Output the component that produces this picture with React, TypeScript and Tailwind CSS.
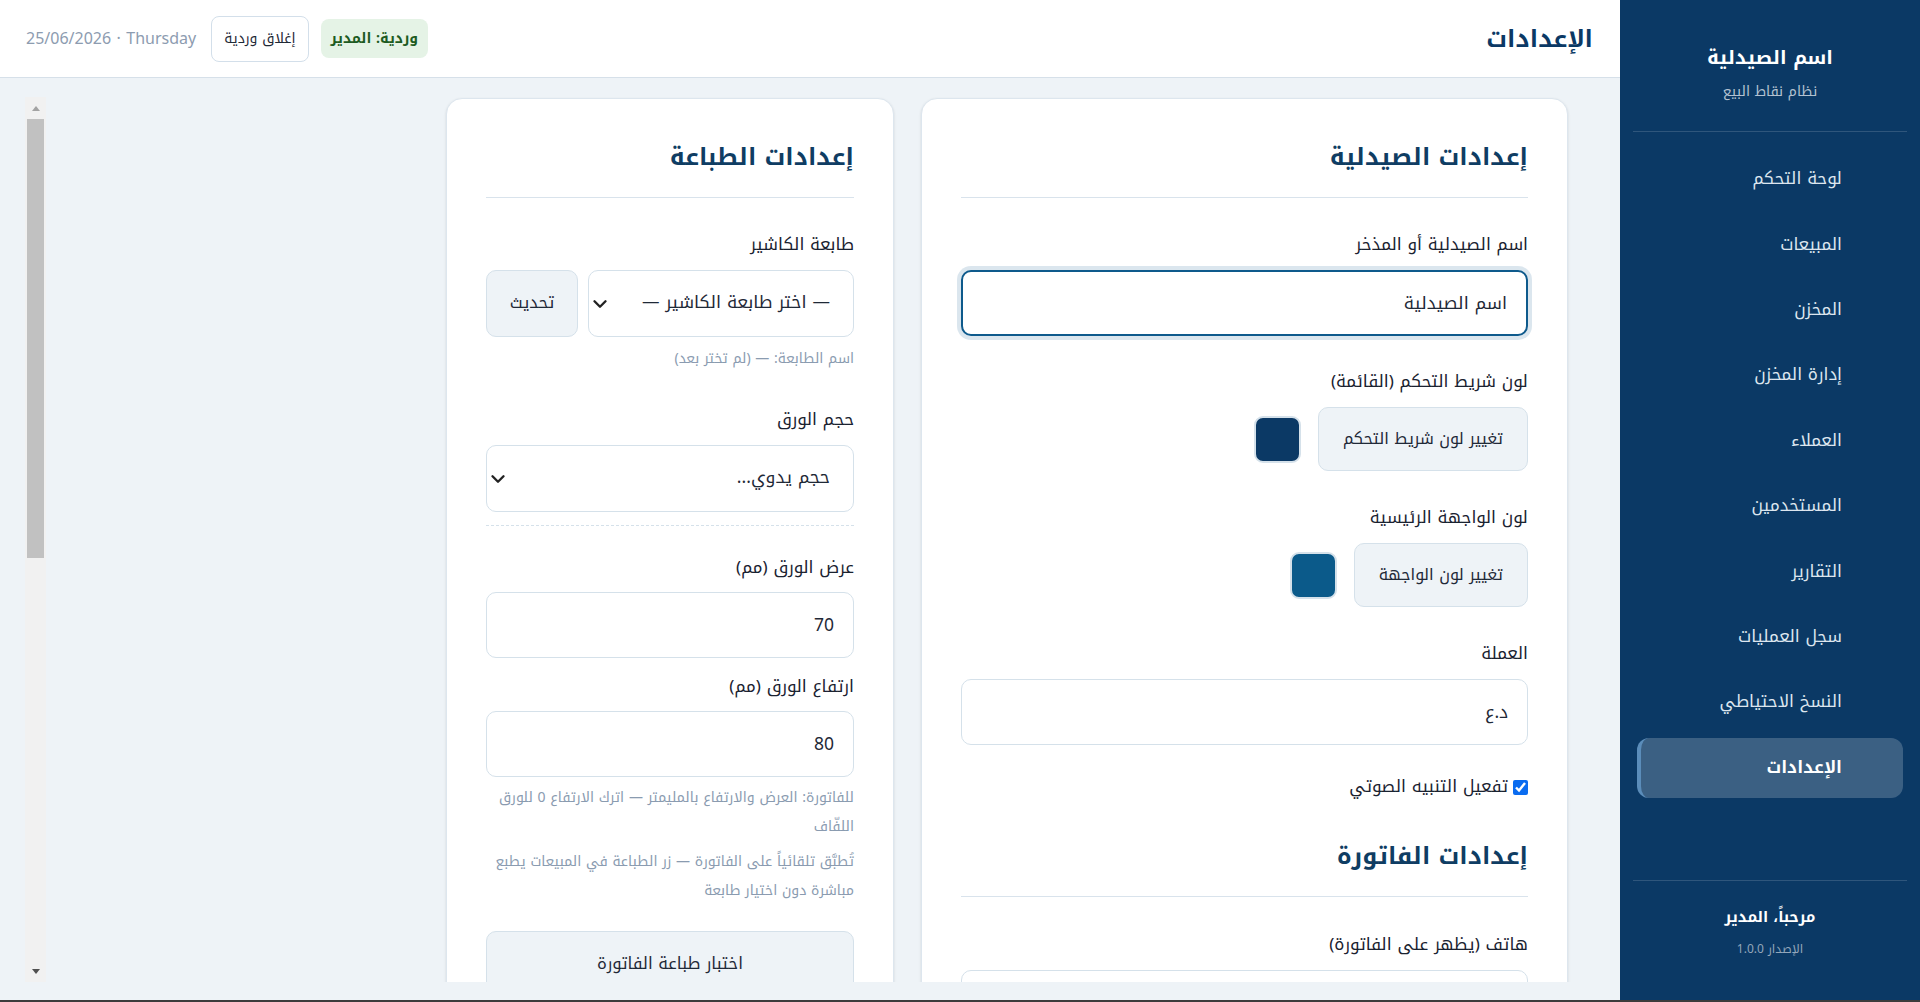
import React from "react";
import { ChevronDown } from "lucide-react";

const navItems = [
  "لوحة التحكم",
  "المبيعات",
  "المخزن",
  "إدارة المخزن",
  "العملاء",
  "المستخدمين",
  "التقارير",
  "سجل العمليات",
  "النسخ الاحتياطي",
  "الإعدادات",
];

const Sidebar: React.FC = () => (
  <aside className="w-[300px] shrink-0 bg-[#0b3965] text-white flex flex-col">
    <div className="mx-[13px] pt-[44px] pb-[29px] border-b border-white/15 text-center">
      <div className="text-[19px] font-bold leading-[28px]">اسم الصيدلية</div>
      <div className="mt-[9px] text-[14px] leading-[21px] text-[#b4c2d1]">نظام نقاط البيع</div>
    </div>
    <nav className="flex-1 flex flex-col gap-[5.4px] pt-[17px] px-[17px]">
      {navItems.map((item) =>
        item === "الإعدادات" ? (
          <div
            key={item}
            className="h-[60px] flex items-center pr-[61px] rounded-xl bg-white/20 border-l-4 border-[#5b8dba] text-[17px] font-bold text-white"
          >
            {item}
          </div>
        ) : (
          <div key={item} className="h-[60px] flex items-center pr-[61px] rounded-xl text-[17px] text-[#dde6ef]">
            {item}
          </div>
        )
      )}
    </nav>
    <div className="mx-[13px] h-[120px] border-t border-white/15 pt-[25px] text-center">
      <div className="text-[15px] font-bold leading-[22px]">مرحباً، المدير</div>
      <div className="mt-[12px] text-[12px] leading-[18px] text-[#93a6ba]">الإصدار 1.0.0</div>
    </div>
  </aside>
);

const Label: React.FC<{ children: React.ReactNode; className?: string }> = ({ children, className = "" }) => (
  <div className={"text-[17px] leading-[26px] text-[#1a2230] mb-[13px] " + className}>{children}</div>
);

const TextInput: React.FC<{ value?: string; focused?: boolean }> = ({ value = "", focused }) => (
  <input
    readOnly
    value={value}
    className={
      "w-full h-[66px] rounded-[10px] bg-white px-[19px] text-[17.5px] text-[#1f2937] outline-none " +
      (focused ? "border-2 border-[#0e5a8c] ring-4 ring-[#0b5a8a]/15" : "border border-[#d5e1ea]")
    }
  />
);

const SelectBox: React.FC<{ text: string }> = ({ text }) => (
  <div className="relative w-full h-[67px] rounded-[10px] border border-[#d5e1ea] bg-white flex items-center pr-[23px] text-[17.5px] text-[#1f2937]">
    {text}
    <ChevronDown size={22} strokeWidth={2.6} className="absolute left-0 top-1/2 -translate-y-1/2 text-[#222]" />
  </div>
);

const ColorRow: React.FC<{ text: string; color: string }> = ({ text, color }) => (
  <div className="flex items-center gap-[17px]">
    <button className="h-[64px] px-6 rounded-[10px] bg-[#eef3f7] border border-[#d5e1ea] text-[16px] text-[#1f2937]">
      {text}
    </button>
    <div className="w-[47px] h-[47px] rounded-[9px] border-2 border-[#d5e1ea]" style={{ backgroundColor: color }} />
  </div>
);

const CardTitle: React.FC<{ children: React.ReactNode; className?: string }> = ({ children, className = "" }) => (
  <h2
    className={
      "text-[24px] font-bold leading-[39px] text-[#0f3d63] pb-5 border-b border-[#d9e3ec] " + className
    }
  >
    {children}
  </h2>
);

const PharmacyCard: React.FC = () => (
  <section className="w-[647px] shrink-0 bg-white rounded-2xl border border-[#dde6ee] shadow-sm px-[39px] pt-[39px] pb-10">
    <CardTitle>إعدادات الصيدلية</CardTitle>

    <Label className="mt-[33px]">اسم الصيدلية أو المذخر</Label>
    <TextInput value="اسم الصيدلية" focused />

    <Label className="mt-[32px]">لون شريط التحكم (القائمة)</Label>
    <ColorRow text="تغيير لون شريط التحكم" color="#0b3965" />

    <Label className="mt-[33px]">لون الواجهة الرئيسية</Label>
    <ColorRow text="تغيير لون الواجهة" color="#0b5a8a" />

    <Label className="mt-[33px]">العملة</Label>
    <TextInput value="د.ع" />

    <label className="mt-[29px] h-[26px] flex items-center gap-[5px] text-[17px] text-[#1a2230]">
      <input type="checkbox" defaultChecked className="w-[15px] h-[15px] accent-[#0a6cf0]" />
      تفعيل التنبيه الصوتي
    </label>

    <CardTitle className="mt-[37px]">إعدادات الفاتورة</CardTitle>

    <Label className="mt-[34px]">هاتف (يظهر على الفاتورة)</Label>
    <TextInput />

    <Label className="mt-[32px]">العنوان (يظهر على الفاتورة)</Label>
    <TextInput />

    <Label className="mt-[32px]">اسم الصيدلي المسؤول</Label>
    <TextInput />

    <Label className="mt-[32px]">رقم السجل التجاري</Label>
    <TextInput />

    <Label className="mt-[32px]">ملاحظة أسفل الفاتورة</Label>
    <textarea
      readOnly
      defaultValue="شكراً لزيارتكم"
      className="w-full h-[110px] rounded-[10px] border border-[#d5e1ea] px-[19px] py-3 text-[17.5px] text-[#1f2937] outline-none resize-none"
    />

    <label className="mt-[29px] h-[26px] flex items-center gap-[5px] text-[17px] text-[#1a2230]">
      <input type="checkbox" className="w-[15px] h-[15px] accent-[#0a6cf0]" />
      طباعة نسختين من الفاتورة
    </label>

    <button className="mt-[32px] w-full h-[56px] rounded-[10px] bg-[#0b5a8a] text-white text-[17px] font-bold">
      حفظ الإعدادات
    </button>
  </section>
);

const PrintCard: React.FC = () => (
  <section className="w-[448px] shrink-0 bg-white rounded-2xl border border-[#dde6ee] shadow-sm px-[39px] pt-[39px] pb-10">
    <CardTitle>إعدادات الطباعة</CardTitle>

    <Label className="mt-[33px]">طابعة الكاشير</Label>
    <div className="flex gap-[10px]">
      <div className="flex-1">
        <SelectBox text="— اختر طابعة الكاشير —" />
      </div>
      <button className="w-[92px] h-[67px] rounded-[10px] bg-[#eef3f7] border border-[#d5e1ea] text-[16.5px] text-[#1f2937]">
        تحديث
      </button>
    </div>
    <div className="mt-[11px] text-[14px] leading-[21px] text-[#8a9bb0]">اسم الطابعة: — (لم تختر بعد)</div>

    <Label className="mt-[37px]">حجم الورق</Label>
    <SelectBox text="حجم يدوي..." />

    <div className="mt-[13px] border-t border-dashed border-[#d5e1ea]" />

    <Label className="mt-[28px] !mb-[12px]">عرض الورق (مم)</Label>
    <TextInput value="70" />

    <Label className="mt-[15px] !mb-[12px]">ارتفاع الورق (مم)</Label>
    <TextInput value="80" />

    <p className="mt-[6px] text-[14px] leading-[29px] text-[#8a9bb0]">
      للفاتورة: العرض والارتفاع بالمليمتر — اترك الارتفاع 0 للورق
      <br />
      اللفّاف
    </p>
    <p className="mt-[6px] text-[14px] leading-[29px] text-[#8a9bb0]">
      تُطبَّق تلقائياً على الفاتورة — زر الطباعة في المبيعات يطبع
      <br />
      مباشرة دون اختيار طابعة
    </p>

    <button className="mt-[26px] w-full h-[66px] rounded-[10px] bg-[#eef3f7] border border-[#d5e1ea] text-[16.5px] text-[#1f2937]">
      اختبار طباعة الفاتورة
    </button>
  </section>
);

// vertical scrollbar of the settings panel (classic style, arrows at both ends)
const ScrollTrack: React.FC = () => (
  <div className="w-[21px] shrink-0 bg-[#f1f1f1] flex flex-col">
    <div className="h-[22px] flex items-center justify-center">
      <div className="w-0 h-0 border-x-[4.5px] border-x-transparent border-b-[5px] border-b-[#a3a3a3]" />
    </div>
    <div className="flex-1 px-[2px]">
      <div className="h-[439px] bg-[#c1c1c1]" />
    </div>
    <div className="h-[22px] flex items-center justify-center">
      <div className="w-0 h-0 border-x-[4.5px] border-x-transparent border-t-[5px] border-t-[#505050]" />
    </div>
  </div>
);

export default function App() {
  return (
    <div
      dir="rtl"
      className="w-[1920px] h-[1002px] flex flex-col overflow-hidden font-['Noto_Kufi_Arabic','Noto_Sans_Arabic','DejaVu_Sans',sans-serif]"
    >
      <div className="h-[1000px] flex">
        <Sidebar />
        <div className="flex-1 min-w-0 flex flex-col bg-[#eef3f7]">
          <header className="h-[78px] shrink-0 bg-white border-b border-[#d6e0e9] flex items-center justify-between pr-[27px] pl-[26px]">
            <h1 className="text-[24px] font-bold text-[#0b3965]">الإعدادات</h1>
            <div className="flex items-center">
              <span className="h-[39px] px-[10px] flex items-center rounded-lg bg-[#e5f3e6] text-[14px] font-bold text-[#1d5b22]">
                وردية: المدير
              </span>
              <button className="mr-[12px] h-[46px] px-3 rounded-lg border border-[#d3dfea] bg-white text-[14px] text-[#1f2937]">
                إغلاق وردية
              </button>
              <span className="mr-[15px] text-[16px] text-[#8d9cb0]" dir="ltr">
                25/06/2026 · Thursday
              </span>
            </div>
          </header>
          <div className="flex-1 min-h-0 flex pt-[19px] pb-[18px] pl-[25px] pr-[27px]">
            <div className="flex-1 min-w-0 overflow-hidden pr-[25px]">
              <div className="flex items-start gap-[27px] pt-px">
                <PharmacyCard />
                <PrintCard />
              </div>
            </div>
            <ScrollTrack />
          </div>
        </div>
      </div>
      <div className="h-[2px] bg-[#3c3c3c]" />
    </div>
  );
}
